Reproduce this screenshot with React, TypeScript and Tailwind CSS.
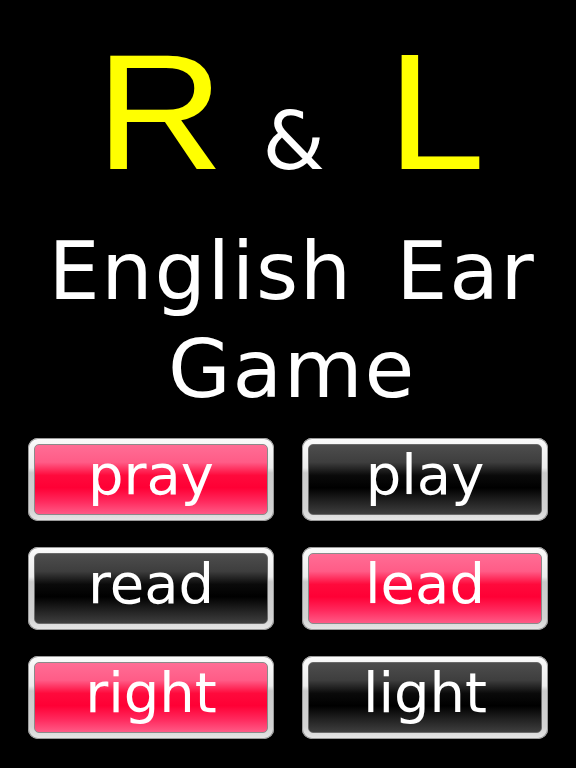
const words: { text: string; red: boolean }[] = [
  { text: "pray", red: true },
  { text: "play", red: false },
  { text: "read", red: false },
  { text: "lead", red: true },
  { text: "right", red: true },
  { text: "light", red: false },
];

function WordButton({ text, red }: { text: string; red: boolean }) {
  return (
    <div className="h-[83px] rounded-[10px] p-[6px] bg-[linear-gradient(to_bottom,#fbfbfb_0%,#ececec_36%,#cbcbcb_42%,#d2d2d2_85%,#e6e6e6_100%)] shadow-[inset_0_0_0_1px_#9a9a9a]">
      <div
        className={
          red
            ? "h-full rounded-[5px] border border-[#8a8a8a] flex items-center justify-center pb-[10px] bg-[linear-gradient(to_bottom,#ff6d95_0%,#ff5c87_25%,#ff0a3c_44%,#ff0035_62%,#ff2a5e_82%,#ff5a86_100%)]"
            : "h-full rounded-[5px] border border-[#6a6a6a] flex items-center justify-center pb-[10px] bg-[linear-gradient(to_bottom,#4d4d4d_0%,#3e3e3e_25%,#0a0a0a_44%,#000000_62%,#222222_82%,#3e3e3e_100%)]"
        }
      >
        <span className="text-white text-[56px] leading-[56px] font-['DejaVu_Sans',sans-serif]">
          {text}
        </span>
      </div>
    </div>
  );
}

export default function App() {
  return (
    <div className="w-[576px] h-[768px] bg-black overflow-hidden">
      <div className="h-[197px] pt-[29px] flex items-baseline justify-center">
        <span className="inline-block ml-[6px] scale-x-107 text-[#ffff00] text-[166px] leading-none font-['Liberation_Sans',Arial,sans-serif]">
          R
        </span>
        <span className="ml-[43px] mr-[65px] text-white text-[80px] leading-none font-['DejaVu_Sans',sans-serif]">
          &amp;
        </span>
        <span className="inline-block scale-x-106 text-[#ffff00] text-[166px] leading-none font-['Liberation_Sans',Arial,sans-serif]">
          L
        </span>
      </div>

      <h1 className="mt-[25px] pl-[8px] text-center text-white text-[81px] leading-[98px] tracking-[1.7px] [word-spacing:16px] font-['DejaVu_Sans',sans-serif]">
        English Ear
        <br />
        Game
      </h1>

      <div className="mt-[20px] px-[28px] grid grid-cols-2 gap-x-[28px] gap-y-[26px]">
        {words.map((w) => (
          <WordButton key={w.text} text={w.text} red={w.red} />
        ))}
      </div>
    </div>
  );
}
